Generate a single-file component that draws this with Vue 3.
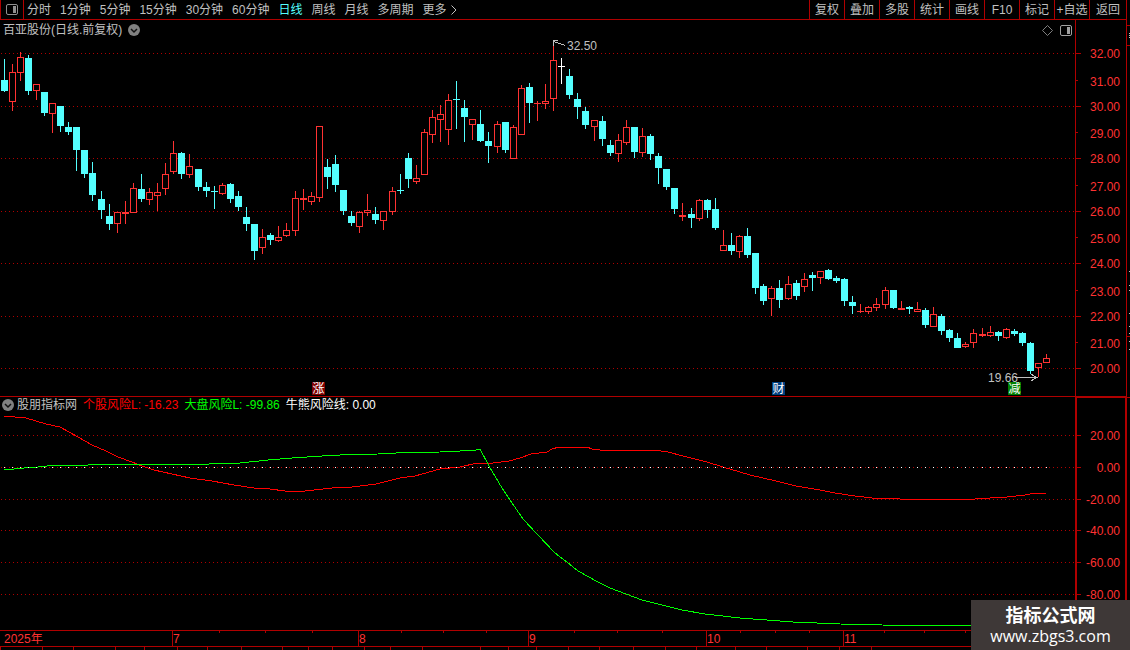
<template>
  <div class="terminal">
    <div class="main">
      <nav class="topbar">
        <button class="panel-btn" aria-label="panel">
          <svg viewBox="0 0 12 11" width="12" height="11">
            <rect x="0.5" y="0.5" width="11" height="10" rx="1.5" fill="none" stroke="#909090" />
            <rect x="7" y="2" width="3" height="7" fill="#909090" />
          </svg>
        </button>
        <div class="periods">
          <button
            v-for="p in periods"
            :key="p"
            class="period"
            :class="{ active: p === period }"
            @click="period = p"
          >{{ p }}</button>
          <button class="period more">
            更多
            <svg viewBox="0 0 6 10" width="6" height="10"><path d="M0.5 0.5L5 5L0.5 9.5" fill="none" stroke="#c0c0c0" /></svg>
          </button>
        </div>
        <div class="tools">
          <button v-for="t in tools" :key="t" class="tool">{{ t }}</button>
        </div>
      </nav>

      <section class="pane price-pane">
        <div class="chart-col">
          <header class="pane-head">
            <span class="stock-name">百亚股份(日线.前复权)</span>
            <button class="round-btn" aria-label="menu">
              <svg viewBox="0 0 12 12" width="12" height="12">
                <circle cx="6" cy="6" r="6" fill="#808080" />
                <path d="M3 5L6 8L9 5" fill="none" stroke="#101010" stroke-width="1.5" />
              </svg>
            </button>
            <span class="head-icons">
              <svg viewBox="0 0 11 11" width="11" height="11"><path d="M5.5 0.5L10.5 5.5L5.5 10.5L0.5 5.5Z" fill="none" stroke="#808080" /></svg>
              <svg viewBox="0 0 12 11" width="12" height="11">
                <rect x="0.5" y="0.5" width="11" height="10" rx="1.5" fill="none" stroke="#a0a0a0" />
                <rect x="7" y="2" width="3" height="7" fill="#a0a0a0" />
              </svg>
            </span>
          </header>
          <div class="plot">
            <svg class="plot-svg price-svg" viewBox="0 40 1075 356" preserveAspectRatio="none">
              <line v-for="y in priceGrid" :key="y" class="grid" x1="1" x2="1075" :y1="y + 0.5" :y2="y + 0.5" />
              <g v-for="(c, i) in candles" :key="i" :class="c.type">
                <rect class="wick" :x="c.x" :y="c.high" width="1" :height="c.low - c.high" />
                <rect v-if="c.bottom - c.top < 3" class="flat" :x="c.x - 3" :y="c.top" width="7" :height="c.bottom - c.top" />
                <rect v-else class="body" :x="c.x - 2.5" :y="c.top + 0.5" width="6" :height="c.bottom - c.top - 1" />
              </g>
              <path class="arrow" d="M565.5 45.5L553.5 41.5M557.5 40.5H553.5V45.5" />
              <path class="arrow" d="M1015 377.5H1037M1031.5 374.5L1037 377.5L1031.5 380.5" />
            </svg>
            <span
              v-for="n in notes"
              :key="n.text"
              class="note"
              :class="n.kind"
              :style="{ left: pct(n.x), top: n.y - 40 + 'px' }"
            >{{ n.text }}</span>
          </div>
        </div>
        <svg class="axis price-axis" viewBox="1076 20 50 376" width="50" height="376">
          <g v-for="t in priceTicks" :key="t.label">
            <rect class="tick" x="1076" :y="t.tick" :width="t.major ? 5 : 2" height="1" />
            <text class="axis-label" x="1120" :y="t.y + 5">{{ t.label }}</text>
          </g>
        </svg>
      </section>

      <section class="pane risk-pane">
        <div class="chart-col">
          <header class="pane-head risk-head">
            <button class="round-btn" aria-label="indicator">
              <svg viewBox="0 0 12 12" width="12" height="12">
                <circle cx="6" cy="6" r="6" fill="#808080" />
                <path d="M3 5L6 8L9 5" fill="none" stroke="#101010" stroke-width="1.5" />
              </svg>
            </button>
            <span>股朋指标网</span>
            <span class="v-red">个股风险L: -16.23</span>
            <span class="v-green">大盘风险L: -99.86</span>
            <span class="v-white">牛熊风险线: 0.00</span>
          </header>
          <svg class="plot-svg risk-svg" viewBox="0 413 1075 217" preserveAspectRatio="none">
            <line v-for="t in riskTicks" :key="t.y" class="grid" x1="1" x2="1075" :y1="t.y + 0.5" :y2="t.y + 0.5" />
            <polyline class="line red" :points="stockRisk" />
            <polyline class="line green" :points="marketRisk" />
            <rect v-for="c in candles" :key="c.x" class="zero" :x="c.x" y="467" width="1" height="1" />
          </svg>
        </div>
        <svg class="axis risk-axis" viewBox="1077 398 48 232" width="48" height="232">
          <g v-for="t in riskTicks" :key="t.label">
            <rect class="tick" x="1077" :y="t.y" width="4" height="1" />
            <text class="axis-label" x="1120" :y="t.y + 5">{{ t.label }}</text>
          </g>
        </svg>
      </section>

      <div class="time-axis">
        <span class="year">2025年</span>
        <span v-for="m in months" :key="m.label" class="month" :style="{ left: wide(m.x) }">{{ m.label }}</span>
        <i v-for="x in weekMarks" :key="x" class="week" :style="{ left: wide(x) }"></i>
      </div>
      <div class="tabs-edge">
        <i v-for="x in tabMarks" :key="x" :style="{ left: wide(x) }"></i>
      </div>
    </div>

    <aside class="side-edge">
      <svg width="3" height="400" viewBox="0 0 3 400">
        <rect v-for="y in [25, 45, 336, 397]" :key="y" x="0" :y="y" width="3" height="1" fill="#b00000" />
        <rect v-for="y in sideMarks" :key="y" x="2" :y="y" width="1" height="1" fill="#c0c0c0" />
      </svg>
    </aside>

    <div class="watermark">
      <strong>指标公式网</strong>
      <span>www.zbgs3.com</span>
    </div>
  </div>
</template>

<script setup>
import { ref } from 'vue';

const periods = ['分时', '1分钟', '5分钟', '15分钟', '30分钟', '60分钟', '日线', '周线', '月线', '多周期'];
const tools = ['复权', '叠加', '多股', '统计', '画线', 'F10', '标记', '+自选', '返回'];
const period = ref('日线');

const pct = (x) => (x / 1075) * 100 + '%';
const wide = (x) => (x / 1126) * 100 + '%';

const priceGrid = [53, 106, 158, 211, 263, 316, 368];
const labelY = [53, 81, 106, 133, 158, 186, 211, 238, 263, 291, 316, 343, 368];
const priceTicks = labelY.map((y, i) => ({
  y,
  tick: i % 2 ? y - 1 : y,
  major: i % 2 === 0,
  label: (32 - i).toFixed(2)
}));
const riskTicks = [435, 467, 499, 530, 562, 594].map((y, i) => ({ y, label: (20 - i * 20).toFixed(2) }));

// x, high, top, bottom, low, type (u 涨 / d 跌 / w 平)
const raw = `4 59 80 91 92 d|12 64 72 102 111 u|20 52 57 73 81 u|28 55 58 91 95 d|36 84 84 91 100 u
44 92 92 113 116 d|52 103 103 114 133 u|60 106 106 126 132 d|68 122 127 132 135 d|76 127 127 150 171 d
84 150 150 174 178 d|92 162 173 195 201 d|101 191 199 210 219 d|109 204 216 224 230 d|117 212 212 224 233 u
125 201 212 214 224 u|133 183 188 213 213 u|141 174 189 199 202 d|149 188 192 200 205 u|157 183 192 196 211 u
165 163 174 189 195 u|173 141 153 172 174 u|181 152 153 174 179 d|189 154 166 175 178 u|198 169 169 187 191 d
206 182 187 191 197 d|214 186 191 192 209 d|222 183 185 194 195 u|230 183 184 199 203 d|238 191 196 207 211 d
246 207 217 224 231 d|254 224 224 251 260 d|262 229 237 248 254 u|270 233 235 240 245 d|278 226 237 241 242 u
286 223 230 236 237 u|295 191 198 231 236 u|303 189 198 200 210 u|311 192 196 202 205 u|319 126 126 198 202 u
327 159 167 177 189 d|335 155 164 185 192 d|343 190 190 211 215 d|351 211 216 223 226 d|359 211 212 227 233 u
367 194 210 213 216 u|375 207 214 220 224 d|383 211 211 221 230 u|392 187 191 212 215 u|400 174 190 191 194 d
408 153 158 179 188 d|416 165 178 182 184 u|424 129 132 175 175 u|432 110 117 135 143 u|440 105 114 120 142 u
448 94 100 130 145 u|456 81 99 100 129 d|464 100 108 117 142 d|472 119 119 125 140 u|480 110 124 141 142 d
488 132 141 146 163 d|497 121 124 147 153 u|505 122 122 150 153 d|513 125 127 159 159 u|521 85 88 135 135 u
529 83 87 103 123 d|537 101 103 104 121 u|545 84 101 104 109 u|553 43 60 99 111 u|561 58 66 67 84 w
569 69 76 95 99 d|577 93 99 107 119 d|585 107 111 125 129 d|594 120 120 127 141 u|602 116 121 139 146 d
610 140 145 153 156 d|618 134 140 154 162 u|626 120 127 143 145 u|634 127 127 152 158 d|642 128 136 153 157 u
650 134 136 154 160 d|658 153 156 168 184 d|666 169 169 187 190 d|674 188 188 209 214 d|682 203 215 217 221 u
691 208 214 218 228 d|699 199 200 219 221 u|707 199 200 210 218 d|715 198 209 228 230 d|723 230 245 251 251 u
731 233 245 251 255 d|739 235 236 252 258 u|747 228 236 255 258 d|755 253 253 288 294 d|763 284 286 301 305 d
771 286 288 299 316 u|779 280 288 300 308 d|788 276 284 299 300 u|796 280 283 296 300 d|804 273 279 287 292 u
812 272 275 278 291 d|820 271 271 278 284 u|828 269 270 279 280 d|836 276 278 281 283 d|844 278 279 301 306 d
852 296 302 306 314 d|860 304 311 312 313 u|868 306 307 312 314 u|876 298 304 308 311 u|885 287 290 305 309 u
893 290 290 308 309 d|901 301 308 310 310 u|909 306 307 309 314 d|917 302 309 312 312 u|925 308 310 325 328 d
933 307 314 327 327 u|941 314 316 331 335 d|949 329 330 338 342 d|957 333 338 348 348 d|965 342 344 347 348 u
973 329 333 343 348 u|982 328 334 336 337 u|990 326 332 336 337 u|998 331 332 336 341 d|1006 328 329 338 339 u
1014 329 331 334 336 d|1022 332 333 343 346 d|1030 342 343 371 374 d|1038 363 363 368 377 u|1046 354 358 363 363 u`;

const types = { u: 'up', d: 'down', w: 'even' };
const candles = raw.split(/[|\n]/).map((row) => {
  const [x, high, top, bottom, low, type] = row.trim().split(' ');
  return { x: +x, high: +high, top: +top, bottom: +bottom, low: +low, type: types[type] };
});

const stockRisk = '4,416 26,418 36,421 46,424 60,427 78,437 92,445 106,451 118,457 132,462 142,466 154,470 172,474 190,478 212,481 234,485 254,488 270,489 285,491 305,491 332,488 352,487 376,484 400,478 415,476 440,469 460,467 477,463 493,463 509,461 520,458 531,454 547,452 552,449 559,447 587,447 592,449 600,450 654,450 668,452 683,456 707,462 723,467 740,472 750,475 776,481 796,486 820,490 835,493 855,496 872,498 888,498 900,499 918,499 926,500 936,499 975,499 990,498 1007,497 1025,495 1035,493 1046,493';
const marketRisk = '4,470 24,468 38,467 56,465 88,465 90,464 209,464 212,463 240,463 268,460 292,458 322,456 340,455 378,454 396,453 440,452 460,451 476,450 480,449 489,466 502,488 510,500 523,519 537,534 555,553 567,562 578,571 598,582 610,588 642,600 682,610 705,614 740,618 793,622 840,624 882,625 971,626';

const notes = [
  { text: '32.50', x: 567, y: 41, kind: 'plain' },
  { text: '19.66', x: 988, y: 373, kind: 'plain' },
  { text: '涨', x: 312, y: 382, kind: 'rise' },
  { text: '财', x: 772, y: 382, kind: 'report' },
  { text: '减', x: 1008, y: 382, kind: 'cut' }
];

const months = [
  { label: '7', x: 172 },
  { label: '8', x: 358 },
  { label: '9', x: 528 },
  { label: '10', x: 706 },
  { label: '11', x: 843 }
];
const weekMarks = [219, 265, 312, 401, 443, 486, 574, 617, 662, 740, 775, 809, 884, 924, 965];
const tabMarks = [0, 42, 73, 115, 144, 177, 207, 241, 282, 308, 332, 364, 390, 422, 480, 508, 536, 568, 599, 633, 665, 696, 735, 766, 807, 839, 871];
const sideMarks = [33, 35, 37, 271, 285, 290, 313, 326, 333, 341, 349];
</script>

<style>
body {
  background: #000;
}
</style>

<style scoped>
.terminal {
  position: relative;
  display: flex;
  background: #000;
  color: #c0c0c0;
  font-family: "Liberation Sans", "Noto Sans CJK SC", sans-serif;
  font-size: 12px;
  line-height: 14px;
  overflow: hidden;
}
.main {
  flex: 1;
  min-width: 0;
}
button {
  padding: 0;
  border: 0;
  background: none;
  color: inherit;
  font: inherit;
  cursor: pointer;
}
svg {
  display: block;
}

/* 顶部工具栏 */
.topbar {
  display: flex;
  height: 19px;
  border-bottom: 1px solid #b00000;
}
.panel-btn {
  display: flex;
  align-items: center;
  justify-content: center;
  width: 24px;
  border-left: 1px solid #b00000;
  border-right: 1px solid #b00000;
}
.periods {
  display: flex;
  gap: 9px;
  padding-left: 3px;
}
.period {
  white-space: nowrap;
}
.period.active {
  color: #54ffff;
}
.more {
  display: flex;
  align-items: center;
  gap: 4px;
}
.tools {
  display: flex;
  margin-left: auto;
}
.tool {
  width: 35px;
  border-left: 1px solid #b00000;
  white-space: nowrap;
}
.tool:last-child {
  width: 37px;
}

/* 图表 */
.pane {
  display: flex;
}
.price-pane {
  border-bottom: 1px solid #b00000;
}
.chart-col {
  flex: 1;
  min-width: 0;
}
.pane-head {
  display: flex;
  align-items: center;
  gap: 6px;
  height: 20px;
  padding: 0 3px;
  white-space: nowrap;
}
.risk-head {
  height: 16px;
  padding: 0 2px;
  line-height: 16px;
}
.round-btn {
  flex: none;
}
.risk-head .round-btn {
  margin-right: -3px;
}
.head-icons {
  display: flex;
  gap: 7px;
  margin-left: auto;
}
.v-red {
  color: #ff0000;
}
.v-green {
  color: #00ff00;
}
.v-white {
  color: #fff;
}
.plot {
  position: relative;
}
.plot-svg {
  width: 100%;
  shape-rendering: crispEdges;
}
.price-svg {
  height: 356px;
}
.risk-svg {
  height: 217px;
}
.grid {
  stroke: #b00000;
  stroke-dasharray: 1 3;
}
.up .wick,
.up .flat {
  fill: #ff3232;
}
.up .body {
  fill: #000;
  stroke: #ff3232;
}
.down rect {
  fill: #54ffff;
}
.down .body {
  stroke: #54ffff;
}
.even rect {
  fill: #fff;
}
.arrow {
  fill: none;
  stroke: #c0c0c0;
}
.line {
  fill: none;
}
.line.red {
  stroke: #ff0000;
}
.line.green {
  stroke: #00ff00;
}
.zero {
  fill: #fff;
}
.note {
  position: absolute;
  line-height: 10px;
}
.rise,
.report,
.cut {
  width: 13px;
  height: 13px;
  line-height: 14px;
  text-align: center;
  color: #fff;
}
.rise {
  background: #800000;
}
.report {
  background: #004080;
}
.cut {
  background: #008000;
}
.axis {
  flex: none;
}
.price-axis {
  border-left: 1px solid #b00000;
}
.risk-axis {
  border: solid #b00000;
  border-width: 1px 1px 0 2px;
}
.tick {
  fill: #b00000;
}
.axis-label {
  fill: #ff3232;
  font-size: 12px;
  text-anchor: end;
}

/* 时间轴 */
.time-axis {
  position: relative;
  height: 15px;
  border-top: 1px solid #b00000;
  border-bottom: 1px solid #b00000;
  color: #ff3232;
  line-height: 16px;
}
.year {
  padding-left: 4px;
}
.month {
  position: absolute;
  top: 0;
  height: 15px;
  border-left: 1px solid #b00000;
}
.week {
  position: absolute;
  top: 0;
  width: 1px;
  height: 2px;
  background: #b00000;
}
.tabs-edge {
  position: relative;
  height: 3px;
}
.tabs-edge i {
  position: absolute;
  top: 0;
  width: 1px;
  height: 3px;
  background: #b00000;
}
.side-edge {
  width: 3px;
  border-left: 1px solid #b00000;
}

.watermark {
  position: absolute;
  right: 0;
  bottom: 0;
  display: flex;
  flex-direction: column;
  align-items: center;
  justify-content: center;
  width: 159px;
  height: 50px;
  background: #3e3837;
  color: #fff;
  font-family: "Open Sans", "Noto Sans CJK SC", sans-serif;
}
.watermark strong {
  font-size: 18px;
  line-height: 22px;
}
.watermark span {
  font-size: 16px;
  line-height: 20px;
}
</style>
